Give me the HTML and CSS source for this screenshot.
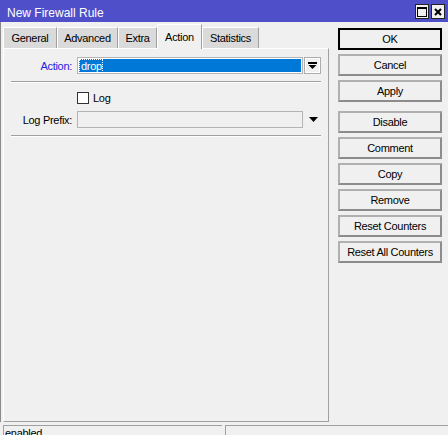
FILE: index.html
```html
<!DOCTYPE html>
<html>
<head>
<meta charset="utf-8">
<link rel="stylesheet" href="styles.css">
</head>
<body>
<div class="window">
  <div class="titlebar">
    <span class="title">New Firewall Rule</span>
    <div class="tb-buttons">
      <span class="tb-btn">
        <svg width="10" height="10" viewBox="0 0 10 10"><rect x="0.5" y="0.5" width="9" height="9" fill="none" stroke="#000" stroke-width="1"/><rect x="0" y="0" width="10" height="2" fill="#000"/></svg>
      </span>
      <span class="tb-btn">
        <svg width="8" height="8" viewBox="0 0 8 8"><path d="M1 1 L7 7 M7 1 L1 7" stroke="#000" stroke-width="2"/></svg>
      </span>
    </div>
  </div>
  <div class="main">
    <div class="left">
      <div class="tabs">
        <div class="tab tab-general">General</div>
        <div class="tab tab-advanced">Advanced</div>
        <div class="tab tab-extra">Extra</div>
        <div class="tab tab-action active">Action</div>
        <div class="tab tab-stats">Statistics</div>
      </div>
      <div class="panel">
        <div class="row">
          <label class="label label-blue">Action:</label>
          <div class="field field-selected"><span class="focus-text">drop</span></div>
          <div class="dd-btn">
            <svg width="9" height="7" viewBox="0 0 9 7"><rect x="0" y="0" width="9" height="2" fill="#000"/><polygon points="0.5,3 8.5,3 4.5,7" fill="#000"/></svg>
          </div>
        </div>
        <div class="sep sep1"></div>
        <div class="row row-check">
          <span class="label"></span>
          <span class="checkbox"></span>
          <span class="check-label">Log</span>
        </div>
        <div class="row row-prefix">
          <label class="label">Log Prefix:</label>
          <div class="field field-disabled"></div>
          <div class="dd-arrow">
            <svg width="9" height="5" viewBox="0 0 9 5"><polygon points="0,0 9,0 4.5,5" fill="#000"/></svg>
          </div>
        </div>
        <div class="sep sep2"></div>
      </div>
    </div>
    <div class="buttons">
      <div class="btn btn-default">OK</div>
      <div class="btn">Cancel</div>
      <div class="btn">Apply</div>
      <div class="btn btn-gap">Disable</div>
      <div class="btn">Comment</div>
      <div class="btn">Copy</div>
      <div class="btn">Remove</div>
      <div class="btn">Reset Counters</div>
      <div class="btn">Reset All Counters</div>
    </div>
  </div>
  <div class="statusbar">
    <div class="status status-left">enabled</div>
    <div class="status status-right"></div>
  </div>
</div>
</body>
</html>
```

FILE: styles.css
```css
* { box-sizing: border-box; }
html, body { margin: 0; padding: 0; }
body {
  width: 448px;
  height: 435px;
  overflow: hidden;
  background: #f0f0f0;
  font-family: "Liberation Sans", Arial, sans-serif;
  font-size: 11px;
  letter-spacing: -0.3px;
  color: #000;
}
.window {
  width: 448px;
  height: 435px;
  overflow: hidden;
  background: #f0f0f0;
}
.titlebar {
  height: 22px;
  background: #4f4fc9;
  display: flex;
  justify-content: space-between;
  align-items: flex-start;
  padding-left: 7px;
  padding-right: 3px;
}
.title {
  color: #fff;
  font-size: 12px;
  letter-spacing: 0;
  line-height: 14px;
  padding-top: 6px;
}
.tb-buttons {
  display: flex;
  gap: 2px;
  padding-top: 4px;
}
.tb-btn {
  width: 14px;
  height: 15px;
  background: #f0f0f0;
  border: 1px solid #222;
  display: flex;
  align-items: center;
  justify-content: center;
}
.main {
  display: flex;
  padding: 0 6px 0 3px;
  box-shadow: inset 1px 0 #8a8a8a;
}
.left {
  width: 326px;
  flex: none;
}
.tabs {
  height: 26px;
  display: flex;
  align-items: flex-end;
}
.tab {
  height: 21px;
  background: #dadada;
  border-top: 1px solid #fff;
  border-left: 1px solid #fff;
  border-right: 1px solid #a0a0a0;
  padding-top: 1px;
  line-height: 19px;
  text-align: center;
  white-space: nowrap;
}
.tab.active {
  height: 25px;
  background: #f0f0f0;
  padding-top: 2px;
  line-height: 20px;
  margin-bottom: -1px;
  position: relative;
  z-index: 1;
}
.tab-general { width: 54px; }
.tab-advanced { width: 61px; }
.tab-extra { width: 39px; }
.tab-action { width: 45px; }
.tab-stats { width: 57px; }
.panel {
  height: 374px;
  border-top: 1px solid #fff;
  border-left: 1px solid #fff;
  border-right: 1px solid #a0a0a0;
  border-bottom: 1px solid #a0a0a0;
  padding: 8px 7px 0 0;
}
.row {
  display: flex;
  align-items: center;
  height: 17px;
}
.label {
  width: 69px;
  flex: none;
  text-align: right;
  padding-right: 1px;
  margin-right: 4px;
  white-space: nowrap;
}
.label-blue { color: #2323e0; }
.field {
  width: 226px;
  height: 17px;
  flex: none;
  border: 1px solid #b4b4b4;
}
.field-selected {
  background: #0078d7;
  box-shadow: inset 0 0 0 1px #fff;
  padding: 2px 0 0 2px;
  color: #fff;
  line-height: 12px;
}
.focus-text {
  display: inline-block;
  outline: 1px dotted #fff;
  padding: 0 0 0 1px;
  line-height: 12px;
}
.field-disabled {
  background: #f0f0f0;
}
.dd-btn {
  width: 17px;
  height: 17px;
  margin-left: 1px;
  border: 1px solid #adadad;
  box-shadow: inset 0 0 0 1px #fff;
  background: #f0f0f0;
  display: flex;
  align-items: center;
  justify-content: center;
}
.dd-arrow {
  width: 17px;
  margin-left: 1px;
  display: flex;
  justify-content: center;
  padding-left: 2px;
}
.sep {
  margin-left: 7px;
  height: 2px;
  border-top: 1px solid #a0a0a0;
  border-bottom: 1px solid #fff;
}
.sep1 { margin-top: 7px; }
.row-check {
  margin-top: 9px;
  height: 12px;
}
.checkbox {
  width: 12px;
  height: 12px;
  background: #fff;
  border: 1px solid #333;
  flex: none;
}
.check-label {
  margin-left: 4px;
}
.row-prefix { margin-top: 7px; }
.sep2 { margin-top: 7px; }
.buttons {
  width: 104px;
  flex: none;
  margin-left: 9px;
  padding-top: 6px;
  display: flex;
  flex-direction: column;
  gap: 4px;
}
.btn {
  height: 22px;
  border: 2px solid;
  border-color: #b0b0b0 #8c8c8c #8c8c8c #b0b0b0;
  background: #f0f0f0;
  text-align: center;
  line-height: 18px;
  white-space: nowrap;
}
.btn-default {
  border: 2px solid #000;
}
.btn-gap { margin-top: 5px; }
.statusbar {
  margin-top: 3px;
  display: flex;
  padding-left: 3px;
  gap: 3px;
}
.status {
  height: 14px;
  border-top: 1px solid #a0a0a0;
  border-left: 1px solid #a0a0a0;
  line-height: 13px;
  padding-left: 1px;
  padding-top: 1px;
}
.status-left { width: 219px; }
.status-right { flex: 1; }
```
